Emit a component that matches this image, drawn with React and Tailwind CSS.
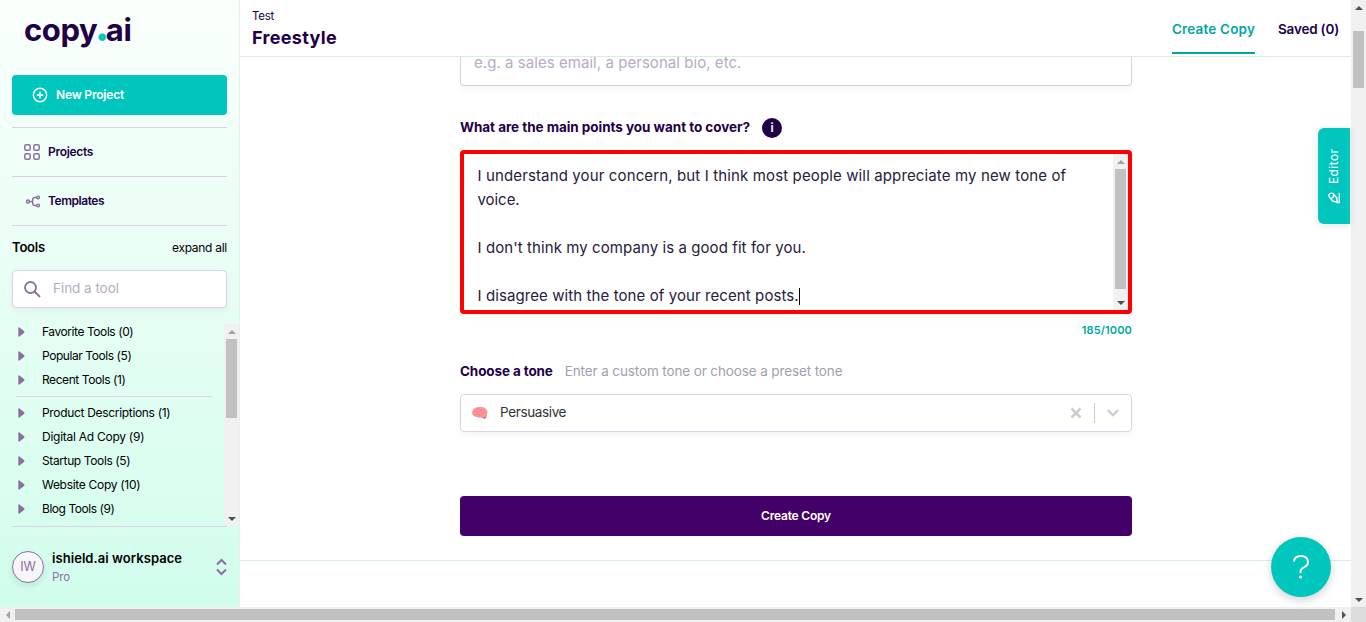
import { CirclePlus } from "lucide-react";

function T({ className = "", children }) {
  return <span className={`inline-block whitespace-pre ${className}`}>{children}</span>;
}

function Arrow({ dir, dark }) {
  const d = { up: "M0 4 4 0 8 4Z", down: "M0 0 4 4 8 0Z", left: "M4 0 0 4 4 8Z", right: "M0 0 4 4 0 8Z" }[dir];
  const v = dir === "up" || dir === "down";
  return (
    <span className="flex h-[15px] w-[15px] shrink-0 items-center justify-center">
      <svg width={v ? 8 : 4} height={v ? 4 : 8} fill={dark ? "#505050" : "#a3a3a3"}><path d={d} /></svg>
    </span>
  );
}

function VScroll({ className, gap, thumb, upDark }) {
  return (
    <div className={`flex w-[15px] shrink-0 flex-col items-center bg-[#f1f1f1] ${className}`}>
      <Arrow dir="up" dark={upDark} />
      <div className={gap} />
      <div className={`w-[11px] bg-[#c1c1c1] ${thumb}`} />
      <div className="flex-1" />
      <Arrow dir="down" dark />
    </div>
  );
}

function ToolRow({ children, className }) {
  return (
    <div className="flex h-6 items-center pl-[6px]">
      <svg width="7" height="10" className="mr-[17px]" fill="#8b6fa0"><path d="M0.3 1.2Q0.3 0 1.5 .5L6 4Q7 5 6 6L1.5 9.500Q.3 10 .3 8.800Z" /></svg>
      <T className={`text-[12px] ${className}`}>{children}</T>
    </div>
  );
}

function Sidebar() {
  return (
    <aside className="flex h-[607px] w-[240px] shrink-0 flex-col border-r border-[#e2f3ec] bg-linear-to-b from-[#fafffc] to-[#d1fdec]">
      <div className="flex h-[75px] items-start pt-[10px] pl-6 text-[31px] leading-[40px] font-bold text-[#220047]">
        <T className="tracking-[-0.4px]">copy</T>
        <T className="-mt-[5px] -ml-[2.5px] w-[11px] text-[44px] text-[#00c6be]">.</T>
        <T className="tracking-[-0.4px]">ai</T>
      </div>
      <div className="px-3">
        <button className="flex h-10 w-[215px] items-center gap-2 rounded-[4px] bg-[#00c6be] pl-5 text-white">
          <CirclePlus size={16} strokeWidth={2.2} />
          <T className="text-[12px] font-semibold tracking-[-0.19px]">New Project</T>
        </button>
        <div className="mt-3 flex h-[49px] w-[215px] items-center gap-2 border-t border-[#dccfe6] pl-3 text-[#220047]">
          <svg width="16" height="16" fill="none" stroke="#8b6fa0" strokeWidth="1.5"><rect x=".8" y=".8" width="5.4" height="5.4" rx="1.5" /><rect x="9.8" y=".8" width="5.4" height="5.4" rx="1.5" /><rect x=".8" y="9.8" width="5.4" height="5.4" rx="1.5" /><rect x="9.8" y="9.8" width="5.4" height="5.4" rx="1.5" /></svg>
          <T className="text-[12px] font-semibold tracking-[-0.3px]">Projects</T>
        </div>
        <div className="flex h-[49px] w-[215px] items-center gap-2 border-t border-[#dccfe6] pl-3 text-[#220047]">
          <svg width="16" height="16" fill="none" stroke="#8b6fa0" strokeWidth="1.4"><circle cx="4" cy="8.500" r="1.5" /><circle cx="14" cy="4.500" r="1.4" /><circle cx="14" cy="12.500" r="1.4" /><path d="M5.500 8.500H8.500M12.500 4.500H11Q8.700 4.500 8.700 6.500V10.500Q8.700 12.500 11 12.500H12.500" /></svg>
          <T className="text-[12px] font-semibold tracking-[-0.45px]">Templates</T>
        </div>
        <div className="flex h-[45px] w-[215px] items-center justify-between border-t border-[#dccfe6]">
          <T className="text-[13px] font-semibold tracking-[-0.19px]">Tools</T>
          <T className="text-[12px] tracking-[-0.28px]">expand all</T>
        </div>
        <div className="flex h-[38px] w-[215px] items-center rounded-[4px] border border-[#dccfe6] bg-white pl-[11px] shadow-[0_3px_6px_rgba(0,80,80,0.05)]">
          <svg width="17" height="17" fill="none" stroke="#8b6fa0" strokeWidth="1.8"><circle cx="6.5" cy="6.5" r="5.5" /><path d="M10.5 10.5 16 16" /></svg>
          <T className="ml-[12px] pb-px text-[13.5px] tracking-[-0.04px] text-[#b9a9c6]">Find a tool</T>
        </div>
      </div>
      <div className="mt-4 flex h-[202px]">
        <div className="-mt-1 w-[224px] pl-3">
          <ToolRow className="tracking-[-0.43px]">Favorite Tools (0)</ToolRow>
          <ToolRow className="tracking-[-0.43px]">Popular Tools (5)</ToolRow>
          <ToolRow className="tracking-[-0.43px]">Recent Tools (1)</ToolRow>
          <div className="mt-1 mb-1 ml-1 h-px w-[196px] bg-[#dccfe6]" />
          <ToolRow className="tracking-[-0.32px]">Product Descriptions (1)</ToolRow>
          <ToolRow className="tracking-[-0.26px]">Digital Ad Copy (9)</ToolRow>
          <ToolRow className="tracking-[-0.38px]">Startup Tools (5)</ToolRow>
          <ToolRow className="tracking-[-0.3px]">Website Copy (10)</ToolRow>
          <ToolRow className="tracking-[-0.45px]">Blog Tools (9)</ToolRow>
        </div>
        <VScroll className="h-[202px]" thumb="h-[79px]" />
      </div>
      <div className="ml-3 flex h-[81px] w-[215px] items-center border-t border-[#dccfe6]">
        <div className="flex h-8 w-8 items-center justify-center rounded-full border border-[#8b6fa0] bg-[#f7f6f8] shadow-[0_3px_6px_rgba(0,80,80,0.12)]">
          <T className="pt-px text-[12.5px] text-[#8b6fa0]">IW</T>
        </div>
        <div className="ml-2 flex flex-1 flex-col items-start">
          <T className="text-[13px] leading-[18px] font-semibold tracking-[0.06px]">ishield.ai workspace</T>
          <T className="pt-px text-[11.5px] leading-[18px] tracking-[-0.1px] text-[#8b6fa0]">Pro</T>
        </div>
        <svg width="11" height="18" fill="none" stroke="#8b6fa0" strokeWidth="2"><path d="M1 6.5 5.5 2 10 6.5M1 11.5 5.5 16 10 11.5" /></svg>
      </div>
    </aside>
  );
}

function Brain() {
  return (
    <svg width="16" height="14" viewBox="0 0 16 14">
      <path d="M9 10 15 9 13.500 12.600Q11 13.600 9 10Z" fill="#d8686f" />
      <path d="M0 6.500Q.3 2.800 4 1.400 7 .3 10.500 1 14.400 2 15.500 5.600 15.800 9 13.500 10.600 11 12 8.500 11.600 5 11.800 3 10.500 0 9.500 0 6.500Z" fill="#fb979d" />
      <path d="M2 6Q4 4 5.500 5.500T9 5M4 3.500Q6 2 8 3.500T12.500 4M3.500 8.500Q5.500 7 7 8.700T11 7.500 14 7.500" fill="none" stroke="#ea7580" strokeWidth=".7" />
    </svg>
  );
}

export default function App() {
  return (
    <div className="flex h-[622px] w-[1366px] flex-col overflow-hidden bg-white font-['Inter',sans-serif] text-black">
      <div className="flex h-[607px]">
        <Sidebar />
        <main className="flex h-[607px] w-[1111px] flex-col">
          <header className="flex h-[57px] shrink-0 justify-between border-b border-[#d9f0e0] pr-3 pl-3 text-[#220047]">
            <div className="flex flex-col items-start pt-[7px]">
              <T className="text-[11.5px] leading-[18px] tracking-[-0.25px]">Test</T>
              <T className="pt-px text-[18px] leading-6 font-bold tracking-[0.32px]">Freestyle</T>
            </div>
            <nav className="flex gap-[23px] text-[13.5px] font-semibold">
              <div className="flex h-[54px] items-center border-b-2 border-[#00a79f] pt-[7px] text-[#00a79f]"><T className="tracking-[0.165px]">Create Copy</T></div>
              <div className="flex h-[54px] items-center pt-[5px]"><T className="tracking-[-0.198px]">Saved (0)</T></div>
            </nav>
          </header>
          <div className="flex h-[504px] shrink-0 flex-col border-b border-[#d9f0e0] pl-[220px]">
            <div className="flex h-[29px] w-[672px] items-start overflow-hidden rounded-b-[4px] border border-t-0 border-[#dccfe6] pl-[13px] shadow-[0_3px_6px_rgba(0,80,80,0.05)]">
              <T className="-mt-1 text-[15px] leading-5 tracking-[0.05px] text-[#b9a9c6]">e.g. a sales email, a personal bio, etc.</T>
            </div>
            <div className="mt-8 flex h-5 items-center gap-3 text-[#220047]">
              <T className="pb-px text-[13.5px] font-bold tracking-[-0.045px]">What are the main points you want to cover?</T>
              <span className="flex h-5 w-5 items-center justify-center rounded-full bg-[#220047] text-[12px] font-semibold text-white">i</span>
            </div>
            <div className="mt-3 flex h-[164px] w-[672px] rounded-[4px] border-4 border-[#ff0000] shadow-[0_3px_6px_rgba(0,80,80,0.05)]">
              <div className="flex flex-1 flex-col items-start pt-[10px] pl-[13.5px] text-[15px] leading-6 text-[#26203a]">
                <T className="tracking-[0.13px]">I understand your concern, but I think most people will appreciate my new tone of</T>
                <T className="tracking-[-0.05px]">voice.</T>
                <T className="mt-6 tracking-[0.08px]">I don't think my company is a good fit for you.</T>
                <div className="mt-6 flex items-center"><T className="tracking-[0.09px]">I disagree with the tone of your recent posts.</T><span className="h-[17px] w-px bg-black" /></div>
              </div>
              <VScroll className="h-[156px]" thumb="h-[120px]" />
            </div>
            <div className="mt-[7px] flex h-[18px] w-[672px] items-center justify-end text-[#00a79f]"><T className="text-[11px] font-semibold tracking-[0.12px]">185/1000</T></div>
            <div className="mt-[22px] flex h-5 items-center gap-3">
              <T className="text-[13.5px] font-bold tracking-[-0.12px] text-[#220047]">Choose a tone</T>
              <T className="text-[13.5px] tracking-[-0.12px] text-[#a0a0b2]">Enter a custom tone or choose a preset tone</T>
            </div>
            <div className="mt-[13px] flex h-[38px] w-[672px] items-center rounded-[4px] border border-[#dccfe6] pl-[11px] shadow-[0_3px_6px_rgba(0,80,80,0.05)]">
              <Brain />
              <T className="ml-3 pb-px text-[13.5px] tracking-[-0.37px] text-[#333]">Persuasive</T>
              <span className="flex-1" />
              <svg width="12" height="12" stroke="#ccc" strokeWidth="2.5"><path d="M1.500 1.500 10.500 10.500M10.500 1.500 1.500 10.500" /></svg>
              <span className="ml-3 h-5 w-px bg-[#ccc]" />
              <svg width="12" height="8" className="mx-3" fill="none" stroke="#ccc" strokeWidth="2.3" strokeLinecap="round"><path d="M1.500 1.700 6 6.200 10.500 1.700" /></svg>
            </div>
            <button className="mt-16 flex h-10 w-[672px] items-center justify-center rounded-[4px] bg-[#430069] text-white"><T className="text-[12px] font-semibold tracking-[-0.2px]">Create Copy</T></button>
          </div>
        </main>
        <VScroll className="h-[607px]" gap="h-4" thumb="h-[57px]" upDark />
      </div>
      <div className="flex h-[15px] items-center bg-[#f1f1f1]">
        <Arrow dir="left" />
        <div className="h-[11px] w-[1320px] bg-[#c1c1c1]" />
        <span className="w-[1px]" />
        <Arrow dir="right" dark />
        <div className="h-[15px] w-[15px] bg-[#dcdcdc]" />
      </div>
      <div className="absolute top-32 left-[1318px] flex h-24 w-8 flex-col items-center rounded-l-[6px] bg-[#00c6be] pt-5 text-white shadow-[0_2px_8px_rgba(0,0,0,0.1)]">
        <span className="flex h-9 rotate-180 items-center [writing-mode:vertical-rl]"><T className="text-[12px] tracking-[0.4px]">Editor</T></span>
        <svg width="12" height="12" className="mt-2" fill="none" stroke="#fff" strokeWidth="1.4"><path d="M11.300 1V10.500H8.500M1.300 5Q.3 3 1.800 1.800T5 1.600L8.800 6 9.200 10.300 5 9.200ZM2.800 6.600Q5.300 6 6 3.200" /></svg>
      </div>
      <button className="absolute top-[537px] left-[1271px] flex h-[60px] w-[60px] items-center justify-center rounded-full bg-[#00c6be] shadow-[0_3px_10px_rgba(0,0,0,0.18)]">
        <svg width="16" height="24" fill="none" stroke="#fff" strokeWidth="2"><path d="M1 6.500Q1.500 1 8 1T15 7Q15 10.500 11 12.300T7.500 18" /><circle cx="7.500" cy="22" r="1.600" fill="#fff" stroke="none" /></svg>
      </button>
    </div>
  );
}
